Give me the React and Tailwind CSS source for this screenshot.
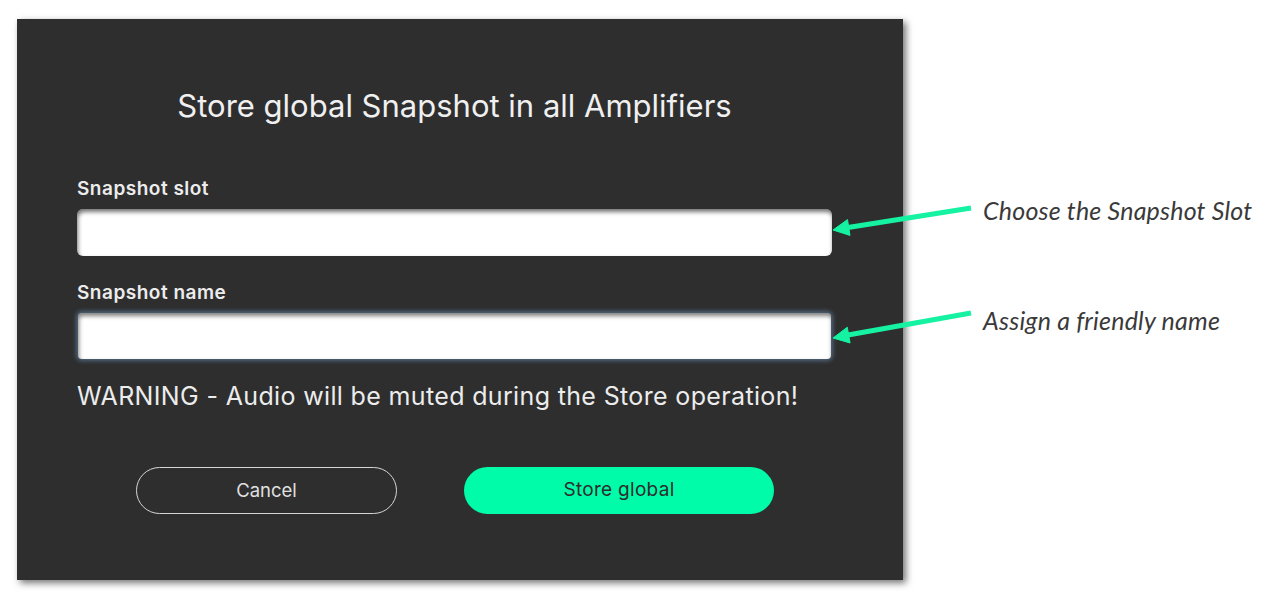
import React from "react";

const Arrows = () => (
  <svg className="absolute inset-0 pointer-events-none" width="1271" height="591" viewBox="0 0 1271 591">
    <g fill="#14f2a2" stroke="#14f2a2">
      <line x1="971" y1="208" x2="848" y2="227.5" strokeWidth="5" />
      <polygon points="833,230 850,235.4 847.5,219.6" strokeWidth="1" />
      <line x1="971" y1="313" x2="848" y2="335" strokeWidth="5" />
      <polygon points="833,338 850.1,343 847.3,327.2" strokeWidth="1" />
    </g>
  </svg>
);

const App = () => {
  return (
    <div className="relative w-[1271px] h-[591px] bg-white flex overflow-hidden">
      <div className="mt-[19px] ml-[17px] w-[886px] h-[561px] bg-[#2e2e2e] shadow-[3px_3px_7px_rgba(0,0,0,0.55)] pl-[60px] pt-[68px] font-['Inter',sans-serif]">
        <div className="w-[755px]">
          <h1 className="text-center text-[31px] leading-[38px] text-[#f0f0f0]">
            Store global Snapshot in all Amplifiers
          </h1>

          <label className="block mt-[52px] text-[19px] leading-[24px] font-semibold tracking-[0.5px] text-[#ececec]">Snapshot slot</label>
          <div className="mt-[8px] h-[47px] rounded-[6px] bg-white shadow-[inset_1px_3px_4px_rgba(0,0,0,0.55)]"></div>

          <label className="block mt-[25px] text-[19px] leading-[24px] font-semibold tracking-[0.5px] text-[#ececec]">Snapshot name</label>
          <div className="mt-[8px] ml-[1px] w-[753px] h-[46px] rounded-[4px] bg-white shadow-[inset_1px_3px_4px_rgba(0,0,0,0.5),0_0_4px_2px_rgba(110,150,190,0.55)]"></div>

          <p className="mt-[21px] text-[25px] leading-[32px] text-[#ececec] tracking-[0.35px]">
            WARNING - Audio will be muted during the Store operation!
          </p>

          <div className="mt-[55px] flex">
            <button className="ml-[59px] w-[261px] h-[47px] rounded-full border border-[#d6d6d6] text-[18.5px] text-[#e0e0e0]">
              Cancel
            </button>
            <button className="ml-[67px] w-[310px] h-[47px] rounded-full bg-[#00fca8] text-[19px] tracking-[0.3px] text-[#2c2c2c]">
              Store global
            </button>
          </div>
        </div>
      </div>

      <div className="ml-[80px] pt-[194px] font-['Lato',sans-serif] italic text-[25px] leading-[32px] text-[#3a3a3a] tracking-[0.2px]">
        <p>Choose the Snapshot Slot</p>
        <p className="mt-[78px]">Assign a friendly name</p>
      </div>

      <Arrows />
    </div>
  );
};

export default App;
